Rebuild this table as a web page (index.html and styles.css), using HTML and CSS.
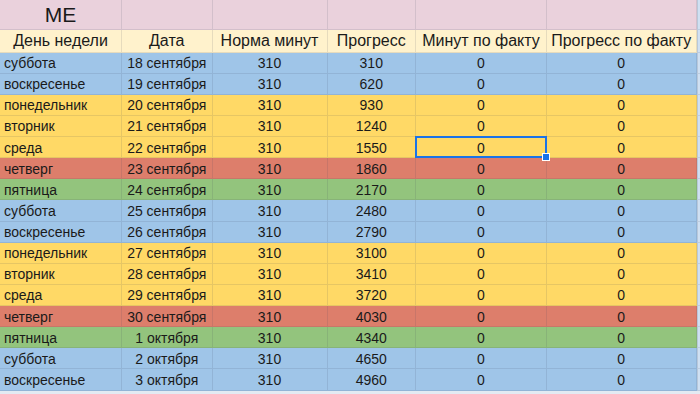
FILE: index.html
```html
<!DOCTYPE html>
<html lang="ru">
<head>
<meta charset="utf-8">
<link rel="stylesheet" href="styles.css">
</head>
<body>
<div class="sheet">
  <div class="row title"><div class="cell c1 big">ME</div><div class="cell"></div><div class="cell"></div><div class="cell"></div><div class="cell"></div><div class="cell"></div><div class="cell edge"></div></div>
  <div class="row head"><div class="cell">День недели</div><div class="cell">Дата</div><div class="cell">Норма минут</div><div class="cell">Прогресс</div><div class="cell">Минут по факту</div><div class="cell">Прогресс по факту</div><div class="cell edge"></div></div>
  <div class="row blue"><div class="cell c1">суббота</div><div class="cell">18 сентября</div><div class="cell">310</div><div class="cell">310</div><div class="cell">0</div><div class="cell">0</div><div class="cell edge"></div></div>
  <div class="row blue"><div class="cell c1">воскресенье</div><div class="cell">19 сентября</div><div class="cell">310</div><div class="cell">620</div><div class="cell">0</div><div class="cell">0</div><div class="cell edge"></div></div>
  <div class="row yellow"><div class="cell c1">понедельник</div><div class="cell">20 сентября</div><div class="cell">310</div><div class="cell">930</div><div class="cell">0</div><div class="cell">0</div><div class="cell edge"></div></div>
  <div class="row yellow"><div class="cell c1">вторник</div><div class="cell">21 сентября</div><div class="cell">310</div><div class="cell">1240</div><div class="cell">0</div><div class="cell">0</div><div class="cell edge"></div></div>
  <div class="row yellow"><div class="cell c1">среда</div><div class="cell">22 сентября</div><div class="cell">310</div><div class="cell">1550</div><div class="cell selected">0</div><div class="cell">0</div><div class="cell edge"></div></div>
  <div class="row red"><div class="cell c1">четверг</div><div class="cell">23 сентября</div><div class="cell">310</div><div class="cell">1860</div><div class="cell">0</div><div class="cell">0</div><div class="cell edge"></div></div>
  <div class="row green"><div class="cell c1">пятница</div><div class="cell">24 сентября</div><div class="cell">310</div><div class="cell">2170</div><div class="cell">0</div><div class="cell">0</div><div class="cell edge"></div></div>
  <div class="row blue"><div class="cell c1">суббота</div><div class="cell">25 сентября</div><div class="cell">310</div><div class="cell">2480</div><div class="cell">0</div><div class="cell">0</div><div class="cell edge"></div></div>
  <div class="row blue"><div class="cell c1">воскресенье</div><div class="cell">26 сентября</div><div class="cell">310</div><div class="cell">2790</div><div class="cell">0</div><div class="cell">0</div><div class="cell edge"></div></div>
  <div class="row yellow"><div class="cell c1">понедельник</div><div class="cell">27 сентября</div><div class="cell">310</div><div class="cell">3100</div><div class="cell">0</div><div class="cell">0</div><div class="cell edge"></div></div>
  <div class="row yellow"><div class="cell c1">вторник</div><div class="cell">28 сентября</div><div class="cell">310</div><div class="cell">3410</div><div class="cell">0</div><div class="cell">0</div><div class="cell edge"></div></div>
  <div class="row yellow"><div class="cell c1">среда</div><div class="cell">29 сентября</div><div class="cell">310</div><div class="cell">3720</div><div class="cell">0</div><div class="cell">0</div><div class="cell edge"></div></div>
  <div class="row red"><div class="cell c1">четверг</div><div class="cell">30 сентября</div><div class="cell">310</div><div class="cell">4030</div><div class="cell">0</div><div class="cell">0</div><div class="cell edge"></div></div>
  <div class="row green"><div class="cell c1">пятница</div><div class="cell">1 октября</div><div class="cell">310</div><div class="cell">4340</div><div class="cell">0</div><div class="cell">0</div><div class="cell edge"></div></div>
  <div class="row blue"><div class="cell c1">суббота</div><div class="cell">2 октября</div><div class="cell">310</div><div class="cell">4650</div><div class="cell">0</div><div class="cell">0</div><div class="cell edge"></div></div>
  <div class="row blue"><div class="cell c1">воскресенье</div><div class="cell">3 октября</div><div class="cell">310</div><div class="cell">4960</div><div class="cell">0</div><div class="cell">0</div><div class="cell edge"></div></div>
</div>
</body>
</html>
```

FILE: styles.css
```css
html, body {
  margin: 0;
  padding: 0;
}
body {
  background: #e3eaf2;
  font-family: "Liberation Sans", Arial, sans-serif;
  font-size: 14px;
  color: #1a1a1a;
  width: 700px;
  height: 394px;
  overflow: hidden;
}
.sheet {
  display: grid;
  grid-template-columns: 122px 90.5px 115px 88.5px 131px 149.5px 1fr;
  grid-template-rows: 29.5px 23px repeat(16, 21.14px);
}
.row {
  display: contents;
}
.cell {
  box-sizing: border-box;
  border-right: 1px solid rgba(60, 70, 90, 0.13);
  border-bottom: 1px solid rgba(60, 70, 90, 0.13);
  display: flex;
  align-items: center;
  justify-content: center;
  white-space: nowrap;
  overflow: hidden;
  padding-top: 1px;
}
.c1 {
  justify-content: flex-start;
  padding-left: 4px;
}
.title .cell { background: #ead1dc; }
.title .big {
  font-size: 21px;
  justify-content: center;
  padding-left: 0;
  padding-top: 2px;
}
.head .cell {
  background: #fff2cc;
  font-size: 16px;
}
.blue .cell { background: #9fc5e8; }
.yellow .cell { background: #ffd966; }
.red .cell { background: #dd7e6b; }
.green .cell { background: #93c47d; }
.row .edge {
  background: #cfe0f2;
  border-left: 1px solid rgba(60, 70, 90, 0.15);
  border-right: none;
}
.selected {
  position: relative;
  overflow: visible;
}
.selected::before {
  content: "";
  position: absolute;
  left: -1px;
  top: -1px;
  right: -1px;
  bottom: -1px;
  border: 2px solid #1a73e8;
}
.selected::after {
  content: "";
  position: absolute;
  right: -4px;
  bottom: -4px;
  width: 6px;
  height: 6px;
  background: #1a73e8;
  border: 1px solid #fff;
  z-index: 2;
}
```
